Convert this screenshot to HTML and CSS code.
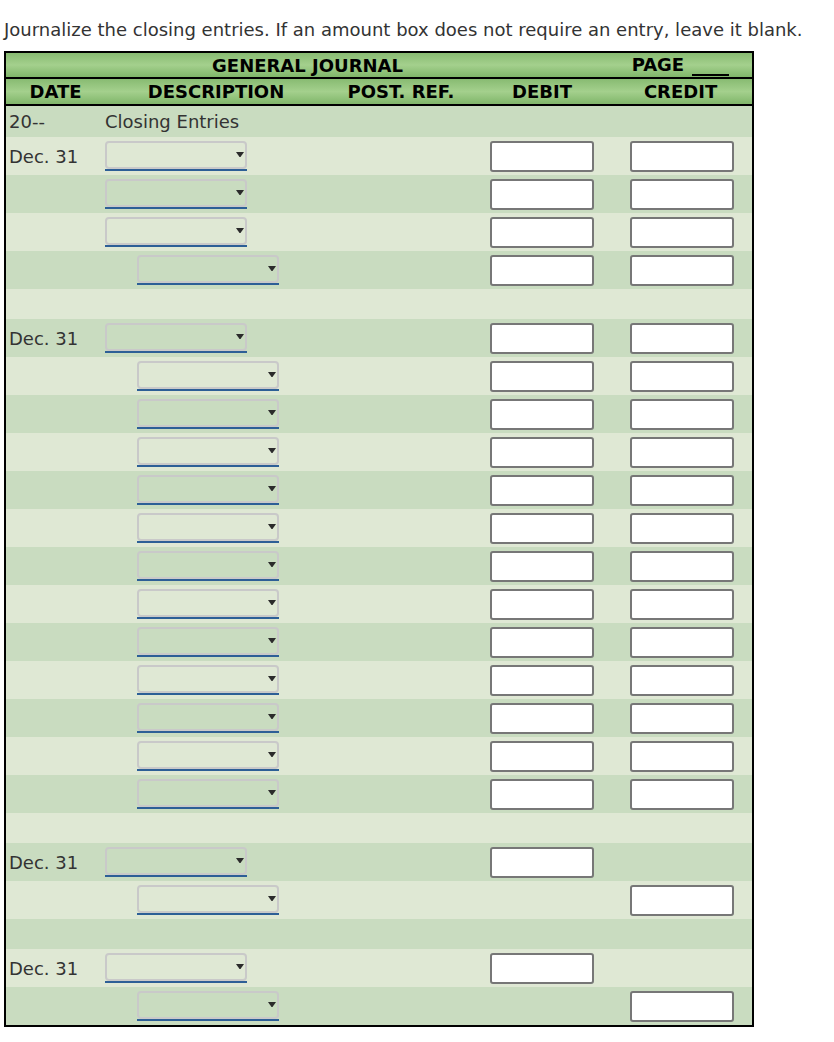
FILE: index.html
```html
<!DOCTYPE html>
<html lang="en">
<head>
<meta charset="utf-8">
<title>General Journal</title>
<link rel="stylesheet" href="styles.css">
</head>
<body>
<p class="instr">Journalize the closing entries. If an amount box does not require an entry, leave it blank.</p>
<table class="journal">
  <colgroup>
    <col class="c-date"><col class="c-desc"><col class="c-post"><col class="c-debit"><col class="c-credit">
  </colgroup>
  <thead>
    <tr class="h1">
      <th colspan="4">GENERAL JOURNAL</th>
      <th class="page">PAGE <span class="page-line"></span></th>
    </tr>
    <tr class="h2">
      <th>DATE</th><th>DESCRIPTION</th><th>POST. REF.</th><th>DEBIT</th><th>CREDIT</th>
    </tr>
  </thead>
  <tbody>
    <tr class="txt"><td class="date">20--</td><td class="desc">Closing Entries</td><td></td><td></td><td></td></tr>
    <tr><td class="date">Dec. 31</td><td class="desc"><span class="dd"><span class="dd-box"><svg class="arr" viewBox="0 0 8 5"><path d="M0 0H8L4.5 5H3.5Z"/></svg></span></span></td><td></td><td class="debit"><input class="amt" type="text"></td><td class="credit"><input class="amt" type="text"></td></tr>
    <tr><td class="date"></td><td class="desc"><span class="dd"><span class="dd-box"><svg class="arr" viewBox="0 0 8 5"><path d="M0 0H8L4.5 5H3.5Z"/></svg></span></span></td><td></td><td class="debit"><input class="amt" type="text"></td><td class="credit"><input class="amt" type="text"></td></tr>
    <tr><td class="date"></td><td class="desc"><span class="dd"><span class="dd-box"><svg class="arr" viewBox="0 0 8 5"><path d="M0 0H8L4.5 5H3.5Z"/></svg></span></span></td><td></td><td class="debit"><input class="amt" type="text"></td><td class="credit"><input class="amt" type="text"></td></tr>
    <tr><td class="date"></td><td class="desc"><span class="dd ind"><span class="dd-box"><svg class="arr" viewBox="0 0 8 5"><path d="M0 0H8L4.5 5H3.5Z"/></svg></span></span></td><td></td><td class="debit"><input class="amt" type="text"></td><td class="credit"><input class="amt" type="text"></td></tr>
    <tr class="gap"><td></td><td></td><td></td><td></td><td></td></tr>
    <tr><td class="date">Dec. 31</td><td class="desc"><span class="dd"><span class="dd-box"><svg class="arr" viewBox="0 0 8 5"><path d="M0 0H8L4.5 5H3.5Z"/></svg></span></span></td><td></td><td class="debit"><input class="amt" type="text"></td><td class="credit"><input class="amt" type="text"></td></tr>
    <tr><td class="date"></td><td class="desc"><span class="dd ind"><span class="dd-box"><svg class="arr" viewBox="0 0 8 5"><path d="M0 0H8L4.5 5H3.5Z"/></svg></span></span></td><td></td><td class="debit"><input class="amt" type="text"></td><td class="credit"><input class="amt" type="text"></td></tr>
    <tr><td class="date"></td><td class="desc"><span class="dd ind"><span class="dd-box"><svg class="arr" viewBox="0 0 8 5"><path d="M0 0H8L4.5 5H3.5Z"/></svg></span></span></td><td></td><td class="debit"><input class="amt" type="text"></td><td class="credit"><input class="amt" type="text"></td></tr>
    <tr><td class="date"></td><td class="desc"><span class="dd ind"><span class="dd-box"><svg class="arr" viewBox="0 0 8 5"><path d="M0 0H8L4.5 5H3.5Z"/></svg></span></span></td><td></td><td class="debit"><input class="amt" type="text"></td><td class="credit"><input class="amt" type="text"></td></tr>
    <tr><td class="date"></td><td class="desc"><span class="dd ind"><span class="dd-box"><svg class="arr" viewBox="0 0 8 5"><path d="M0 0H8L4.5 5H3.5Z"/></svg></span></span></td><td></td><td class="debit"><input class="amt" type="text"></td><td class="credit"><input class="amt" type="text"></td></tr>
    <tr><td class="date"></td><td class="desc"><span class="dd ind"><span class="dd-box"><svg class="arr" viewBox="0 0 8 5"><path d="M0 0H8L4.5 5H3.5Z"/></svg></span></span></td><td></td><td class="debit"><input class="amt" type="text"></td><td class="credit"><input class="amt" type="text"></td></tr>
    <tr><td class="date"></td><td class="desc"><span class="dd ind"><span class="dd-box"><svg class="arr" viewBox="0 0 8 5"><path d="M0 0H8L4.5 5H3.5Z"/></svg></span></span></td><td></td><td class="debit"><input class="amt" type="text"></td><td class="credit"><input class="amt" type="text"></td></tr>
    <tr><td class="date"></td><td class="desc"><span class="dd ind"><span class="dd-box"><svg class="arr" viewBox="0 0 8 5"><path d="M0 0H8L4.5 5H3.5Z"/></svg></span></span></td><td></td><td class="debit"><input class="amt" type="text"></td><td class="credit"><input class="amt" type="text"></td></tr>
    <tr><td class="date"></td><td class="desc"><span class="dd ind"><span class="dd-box"><svg class="arr" viewBox="0 0 8 5"><path d="M0 0H8L4.5 5H3.5Z"/></svg></span></span></td><td></td><td class="debit"><input class="amt" type="text"></td><td class="credit"><input class="amt" type="text"></td></tr>
    <tr><td class="date"></td><td class="desc"><span class="dd ind"><span class="dd-box"><svg class="arr" viewBox="0 0 8 5"><path d="M0 0H8L4.5 5H3.5Z"/></svg></span></span></td><td></td><td class="debit"><input class="amt" type="text"></td><td class="credit"><input class="amt" type="text"></td></tr>
    <tr><td class="date"></td><td class="desc"><span class="dd ind"><span class="dd-box"><svg class="arr" viewBox="0 0 8 5"><path d="M0 0H8L4.5 5H3.5Z"/></svg></span></span></td><td></td><td class="debit"><input class="amt" type="text"></td><td class="credit"><input class="amt" type="text"></td></tr>
    <tr><td class="date"></td><td class="desc"><span class="dd ind"><span class="dd-box"><svg class="arr" viewBox="0 0 8 5"><path d="M0 0H8L4.5 5H3.5Z"/></svg></span></span></td><td></td><td class="debit"><input class="amt" type="text"></td><td class="credit"><input class="amt" type="text"></td></tr>
    <tr><td class="date"></td><td class="desc"><span class="dd ind"><span class="dd-box"><svg class="arr" viewBox="0 0 8 5"><path d="M0 0H8L4.5 5H3.5Z"/></svg></span></span></td><td></td><td class="debit"><input class="amt" type="text"></td><td class="credit"><input class="amt" type="text"></td></tr>
    <tr class="gap"><td></td><td></td><td></td><td></td><td></td></tr>
    <tr><td class="date">Dec. 31</td><td class="desc"><span class="dd"><span class="dd-box"><svg class="arr" viewBox="0 0 8 5"><path d="M0 0H8L4.5 5H3.5Z"/></svg></span></span></td><td></td><td class="debit"><input class="amt" type="text"></td><td class="credit"></td></tr>
    <tr><td class="date"></td><td class="desc"><span class="dd ind"><span class="dd-box"><svg class="arr" viewBox="0 0 8 5"><path d="M0 0H8L4.5 5H3.5Z"/></svg></span></span></td><td></td><td class="debit"></td><td class="credit"><input class="amt" type="text"></td></tr>
    <tr class="gap"><td></td><td></td><td></td><td></td><td></td></tr>
    <tr><td class="date">Dec. 31</td><td class="desc"><span class="dd"><span class="dd-box"><svg class="arr" viewBox="0 0 8 5"><path d="M0 0H8L4.5 5H3.5Z"/></svg></span></span></td><td></td><td class="debit"><input class="amt" type="text"></td><td class="credit"></td></tr>
    <tr><td class="date"></td><td class="desc"><span class="dd ind"><span class="dd-box"><svg class="arr" viewBox="0 0 8 5"><path d="M0 0H8L4.5 5H3.5Z"/></svg></span></span></td><td></td><td class="debit"></td><td class="credit"><input class="amt" type="text"></td></tr>
  </tbody>
</table>
</body>
</html>
```
FILE: styles.css
```css
html, body {
  margin: 0;
  padding: 0;
  background: #fff;
}
body {
  padding: 0 4px;
  font-family: "DejaVu Sans", Verdana, sans-serif;
  color: #333;
}
.instr {
  margin: 20px 0 12px 0;
  font-size: 18px;
  line-height: 19px;
  white-space: nowrap;
}
.journal {
  width: 750px;
  table-layout: fixed;
  border-collapse: separate;
  border-spacing: 0;
  border: 2px solid #000;
}
.c-date { width: 99px; }
.c-desc { width: 222px; }
.c-post { width: 148px; }
.c-debit { width: 134px; }
.c-credit { width: 143px; }

.journal th {
  padding: 0;
  font-size: 18px;
  font-weight: bold;
  color: #000;
  text-align: center;
  background: linear-gradient(#88bb72, #a4d08d 50%, #80b66a);
  border-bottom: 2px solid #000;
  white-space: nowrap;
}
.h1 th { height: 24px; }
.h2 th { height: 25px; }
.page-line {
  display: inline-block;
  width: 37px;
  height: 2px;
  margin-left: 2px;
  background: #000;
  vertical-align: -5px;
}

.journal td {
  padding: 0;
  height: 38px;
  font-size: 18px;
  vertical-align: middle;
  white-space: nowrap;
}
.journal tbody tr:nth-child(odd) td { background: #c9dcc0; }
.journal tbody tr:nth-child(even) td { background: #dfe8d4; }
.journal tr.txt td { height: 31px; }
.journal tr.gap td { height: 30px; }
.journal td.date { padding-left: 3px; }
.journal td.debit { padding-left: 15px; }
.journal td.credit { padding-left: 21px; }

.dd {
  display: inline-block;
  width: 142px;
  border-bottom: 2px solid #2d5f96;
  vertical-align: middle;
}
.dd.ind { margin-left: 32px; }
.dd-box {
  display: flex;
  align-items: center;
  justify-content: flex-end;
  box-sizing: border-box;
  height: 28px;
  border: 2px solid #c9c9c9;
  border-radius: 4px;
  padding-right: 1px;
}
.arr {
  width: 8px;
  height: 5px;
  fill: #2b2b2b;
  margin-top: -1px;
}
.amt {
  display: block;
  box-sizing: border-box;
  width: 104px;
  height: 31px;
  margin: 0;
  padding: 0 4px;
  border: 2px solid #777;
  border-radius: 3px;
  background: #fff;
  font: 16px "DejaVu Sans", sans-serif;
}
```
